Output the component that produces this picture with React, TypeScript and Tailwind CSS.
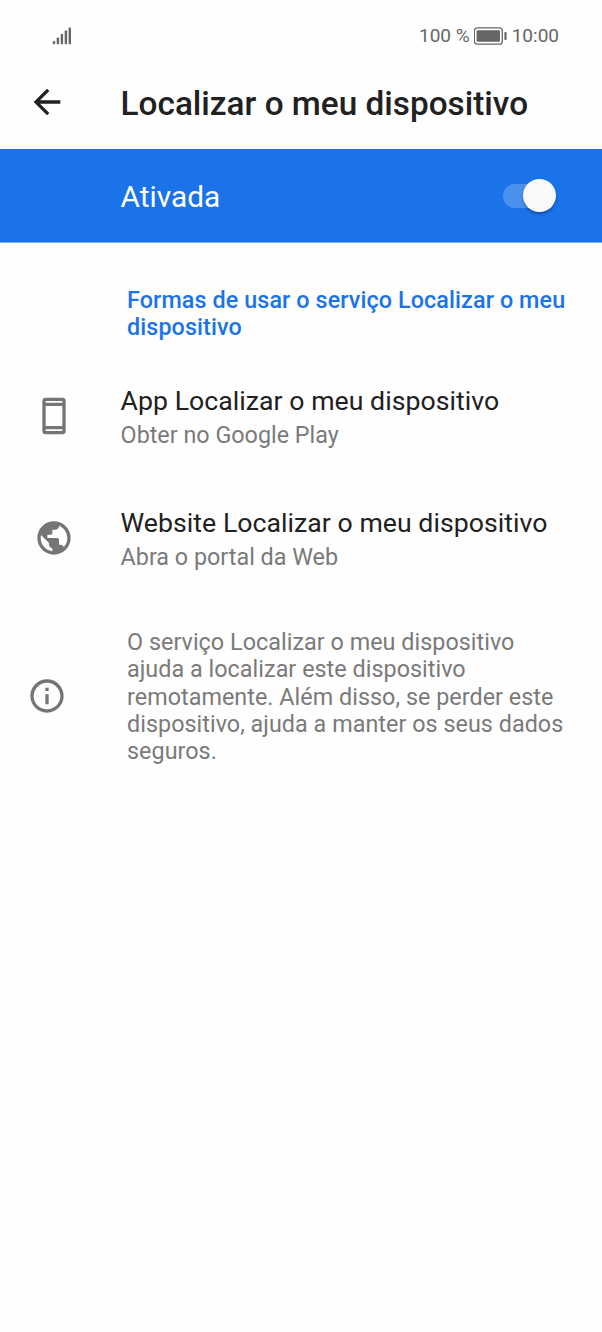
import type { ReactNode } from "react";
import { MdArrowBack, MdInfoOutline, MdPublic } from "react-icons/md";

function SignalIcon() {
  return (
    <svg width={20} height={18} viewBox="0 0 20 18" fill="#666666">
      <rect x="0.8" y="14" width="2.4" height="3.2" rx="0.8" />
      <rect x="4.7" y="10.4" width="2.4" height="6.8" rx="0.8" />
      <rect x="8.7" y="7" width="2.4" height="10.2" rx="0.8" />
      <rect x="12.7" y="3.5" width="2.4" height="13.7" rx="0.8" />
      <rect x="16.6" y="0.4" width="2.4" height="16.8" rx="0.8" />
    </svg>
  );
}

function BatteryIcon() {
  return (
    <svg width={34} height={18} viewBox="0 0 34 18" fill="#666666">
      <rect
        x="0.3"
        y="0.8"
        width="28"
        height="16.4"
        rx="3"
        fill="none"
        stroke="#666666"
        strokeWidth="1.3"
      />
      <rect x="2.6" y="3.2" width="23.4" height="11.6" rx="1" />
      <rect x="30.4" y="5" width="2.2" height="8" rx="0.7" />
    </svg>
  );
}

function PhoneIcon() {
  return (
    <svg width={40} height={40} viewBox="0 0 24 24" fill="currentColor">
      <path
        fillRule="evenodd"
        d="M7 1h10a2 2 0 0 1 2 2v18a2 2 0 0 1-2 2H7a2 2 0 0 1-2-2V3a2 2 0 0 1 2-2zm0 2v1h10V3zm0 3v12h10V6zm0 14v1h10v-1z"
      />
    </svg>
  );
}

interface ItemProps {
  icon: ReactNode;
  title: string;
  subtitle: string;
}

function Item({ icon, title, subtitle }: ItemProps) {
  return (
    <div className="flex h-[122px] items-center">
      <div className="w-[120.6px] pb-[2px] pl-[33.5px] text-[#757575]">{icon}</div>
      <div className="whitespace-nowrap">
        <p className="text-[26.67px] leading-[36px] tracking-[0.03px] text-[#212121]">
          {title}
        </p>
        <p className="text-[23.33px] leading-[32px] text-[#7a7a7a]">{subtitle}</p>
      </div>
    </div>
  );
}

export default function App() {
  return (
    <div className="flex h-[1332px] w-[602px] flex-col bg-[#fefefe] font-[Roboto,sans-serif]">
      <div className="flex h-[72px] items-center justify-between pr-[43px] pl-[52px] text-[#666666]">
        <SignalIcon />
        <div className="flex items-center gap-[4px] text-[19px]">
          <span className="pt-px">100 %</span>
          <BatteryIcon />
          <span className="pt-px">10:00</span>
        </div>
      </div>

      <header className="flex h-[77px] items-center pb-[14px] text-[#212121]">
        <button className="w-[120.6px] pb-[3px] pl-[27px]">
          <MdArrowBack size={40} />
        </button>
        <h1 className="text-[33.33px] font-medium whitespace-nowrap">
          Localizar o meu dispositivo
        </h1>
      </header>

      <div className="flex h-[94px] items-center justify-between border-t border-b border-t-[#2a6fc9] border-b-[#76adf3] bg-[#1a73e8] pr-[46px] pl-[120.6px]">
        <span className="pt-[2px] text-[29.8px] text-white">Ativada</span>
        <div className="flex h-[34px] items-center pb-px">
          <div className="-mr-[20px] h-[24px] w-[40px] rounded-full bg-[#4a91ed]"></div>
          <div className="relative h-[33.4px] w-[33.4px] rounded-full bg-[#fafafa] shadow-[0_2px_3px_rgba(0,0,0,0.3)]"></div>
        </div>
      </div>

      <h2 className="pt-[44px] pl-[127px] text-[23.33px] leading-[27.4px] font-medium tracking-[0.1px] whitespace-nowrap text-[#1a73e8]">
        Formas de usar o serviço Localizar o meu
        <br />
        dispositivo
      </h2>

      <div className="pt-[14px]">
        <Item
          icon={<PhoneIcon />}
          title="App Localizar o meu dispositivo"
          subtitle="Obter no Google Play"
        />
        <Item
          icon={<MdPublic size={40} />}
          title="Website Localizar o meu dispositivo"
          subtitle="Abra o portal da Web"
        />
      </div>

      <div className="flex items-center pt-[29px] text-[#757575]">
        <div className="w-[127px] pb-[3px] pl-[27px]">
          <MdInfoOutline size={40} />
        </div>
        <p className="text-[23.33px] leading-[27.4px] tracking-[0.04px] whitespace-nowrap text-[#7a7a7a]">
          O serviço Localizar o meu dispositivo
          <br />
          ajuda a localizar este dispositivo
          <br />
          remotamente. Além disso, se perder este
          <br />
          dispositivo, ajuda a manter os seus dados
          <br />
          seguros.
        </p>
      </div>
    </div>
  );
}
